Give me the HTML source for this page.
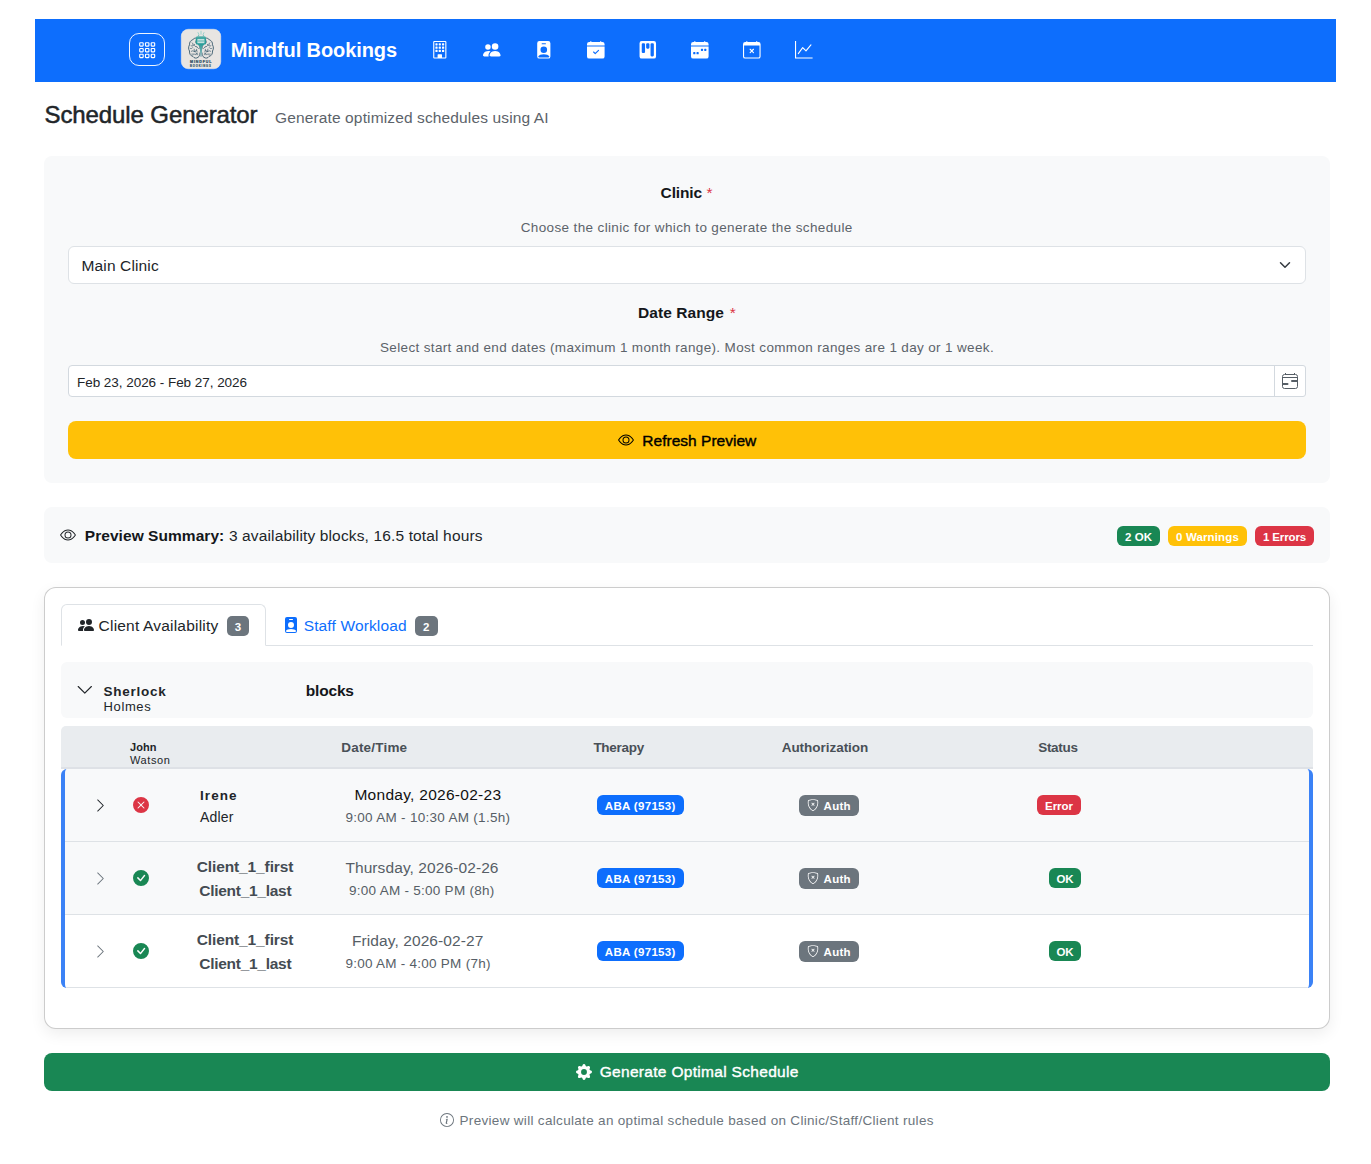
<!DOCTYPE html>
<html lang="en"><head><meta charset="utf-8"><title>Schedule Generator</title>
<style>
html,body{margin:0;padding:0;background:#fff;}
body{width:1371px;height:1164px;position:relative;overflow:hidden;font-family:'Liberation Sans', sans-serif;}
.b{position:absolute;box-sizing:border-box;}
.t{position:absolute;white-space:pre;font-family:'Liberation Sans', sans-serif;}
.i{position:absolute;display:block;overflow:visible;}
</style></head><body>
<div class="b" style="left:35px;top:19px;width:1301px;height:63px;background:#0d6efd"></div>
<div class="b" style="left:129px;top:33px;width:36px;height:33px;border:1px solid rgba(255,255,255,.92);border-radius:10px"></div>
<svg class="i" style="left:137.85px;top:40.9px;color:#fff" width="18.4" height="18.4" viewBox="0 0 16 16" fill="currentColor"><g fill="none" stroke="currentColor" stroke-width="1"><rect x="1.5" y="1.5" width="3" height="3" rx="0.5"/><rect x="1.5" y="6.5" width="3" height="3" rx="0.5"/><rect x="1.5" y="11.5" width="3" height="3" rx="0.5"/><rect x="6.5" y="1.5" width="3" height="3" rx="0.5"/><rect x="6.5" y="6.5" width="3" height="3" rx="0.5"/><rect x="6.5" y="11.5" width="3" height="3" rx="0.5"/><rect x="11.5" y="1.5" width="3" height="3" rx="0.5"/><rect x="11.5" y="6.5" width="3" height="3" rx="0.5"/><rect x="11.5" y="11.5" width="3" height="3" rx="0.5"/></g></svg>
<svg class="i" style="left:181px;top:29px" width="40" height="40" viewBox="0 0 40 40">
<defs><linearGradient id="lg1" x1="0" y1="0" x2="0" y2="1"><stop offset="0" stop-color="#5fb3ae"/><stop offset="0.35" stop-color="#2a9d98"/><stop offset="1" stop-color="#2a9d98"/></linearGradient>
<linearGradient id="lg2" x1="0" y1="0" x2="0" y2="1"><stop offset="0" stop-color="#2a9d98"/><stop offset="1" stop-color="#9db8c0"/></linearGradient></defs>
<rect x="0.250" y="0.250" width="39.500" height="39.500" rx="7" fill="#e8e5e2" stroke="#f3eee6" stroke-width="0.500"/>
<g fill="none" stroke="#38596b" stroke-linecap="round" stroke-linejoin="round" transform="translate(20,0) scale(.925,1) translate(-20,0)">
<path stroke-width="0.950" d="M17.3 10.300C15.600 8.500 12.500 8.700 11 10.800C8.800 11.300 7.300 13.500 7.600 15.800C6.300 17.600 6.300 20.400 7.600 22C7.200 24.600 8.800 27 11.200 27.400C12.400 29.300 15.200 29.600 16.800 28.300C18.300 27.500 19.100 25.800 18.900 24"/>
<path stroke-width="0.700" d="M8.600 19.500c1 .300 1.800 0 2.400-.800M10.300 13.600c.900.500 1.200 1.400.900 2.300M15.300 20.300c.200 1.200-.300 2.200-1.300 2.700M16.600 25.800c-.900-.200-1.500-.900-1.600-1.800M9.900 25.200c.700.200 1.300 0 1.700-.500M9.300 16.800c1.500.600 2.700.100 3.400-1.200M12.700 15.600c.2 1.500 1.200 2.400 2.800 2.300M14.300 11.800c-.6 1.200-.2 2.400 1 3M9.500 22.300c1.200-.900 2.600-.700 3.400.400M12.900 22.700c.8-1.100 2.100-1.300 3.200-.600M12.900 22.700l-.300-2.600M11.300 26.100c.8-1 2.100-1.300 3.200-.700M14.500 25.400l2-1.400M15.500 17.900l1.800 1.600M17.300 14.500c.9 1.700 1.400 3.400 1.600 5.300"/>
<g transform="translate(40,0) scale(-1,1)"><path stroke-width="0.950" d="M17.3 10.300C15.600 8.500 12.500 8.700 11 10.800C8.800 11.300 7.300 13.500 7.600 15.800C6.300 17.600 6.300 20.400 7.600 22C7.200 24.600 8.800 27 11.200 27.400C12.400 29.300 15.200 29.600 16.800 28.300C18.300 27.500 19.100 25.800 18.900 24"/><path stroke-width="0.700" d="M8.600 19.500c1 .300 1.800 0 2.400-.800M10.300 13.600c.900.500 1.200 1.400.900 2.300M15.300 20.300c.200 1.200-.300 2.200-1.300 2.700M16.600 25.800c-.900-.200-1.500-.900-1.600-1.800M9.900 25.200c.700.200 1.300 0 1.700-.500M9.300 16.800c1.500.600 2.700.100 3.400-1.200M12.700 15.600c.2 1.500 1.200 2.400 2.800 2.300M14.300 11.800c-.6 1.200-.2 2.400 1 3M9.500 22.300c1.200-.900 2.600-.700 3.400.400M12.900 22.700c.8-1.100 2.100-1.300 3.200-.600M12.900 22.700l-.300-2.600M11.300 26.100c.8-1 2.100-1.300 3.200-.700M14.500 25.400l2-1.400M15.500 17.900l1.800 1.600M17.300 14.500c.9 1.700 1.400 3.400 1.600 5.300"/></g>
</g>
<path d="M16.400 15h7.200l-2.500 2.700l-.250 10.100h-1.700l-.250-10.100z" fill="url(#lg2)"/>
<path d="M17.600 5.800v1.600M22.400 5.800v1.600" stroke="#4aa9a4" stroke-width="0.700"/>
<rect x="14.800" y="7.200" width="10.200" height="8.200" rx="1.500" fill="url(#lg1)"/>
<rect x="16.400" y="9.900" width="7" height="4.300" fill="#d3e9e6"/>
<path d="M16.400 11.300h7M16.400 12.700h7" stroke="#4aa9a4" stroke-width="0.600"/>
<path d="M20 2.200v3M17 3.600l.9 1.800M23 3.600l-.9 1.800" stroke="#93cfca" stroke-width="0.900" stroke-linecap="round"/>
<text x="9" y="34.200" font-family="Liberation Sans, sans-serif" font-weight="700" font-size="3.600" fill="#2f4e61" stroke="#2f4e61" stroke-width="0.220" textLength="21.500" lengthAdjust="spacing">MINDFUL</text>
<text x="9" y="38" font-family="Liberation Sans, sans-serif" font-weight="700" font-size="2.700" fill="#3b5a6c" stroke="#3b5a6c" stroke-width="0.180" textLength="20.800" lengthAdjust="spacing">BOOKINGS</text>
</svg>
<div class="t" style="left:230.70px;top:40px;font-size:20px;line-height:20px;color:#fff;font-weight:700;letter-spacing:-0.092px;">Mindful Bookings</div>
<svg class="i" style="left:430.7px;top:41px;color:#fff" width="17.6" height="17.6" viewBox="0 0 16 16" fill="currentColor"><path d="M4 2.5a.5.5 0 0 1 .5-.5h1a.5.5 0 0 1 .5.5v1a.5.5 0 0 1-.5.5h-1a.5.5 0 0 1-.5-.5zm3 0a.5.5 0 0 1 .5-.5h1a.5.5 0 0 1 .5.5v1a.5.5 0 0 1-.5.5h-1a.5.5 0 0 1-.5-.5zm3.5-.5a.5.5 0 0 0-.5.5v1a.5.5 0 0 0 .5.5h1a.5.5 0 0 0 .5-.5v-1a.5.5 0 0 0-.5-.5zM4 5.5a.5.5 0 0 1 .5-.5h1a.5.5 0 0 1 .5.5v1a.5.5 0 0 1-.5.5h-1a.5.5 0 0 1-.5-.5zM7.5 5a.5.5 0 0 0-.5.5v1a.5.5 0 0 0 .5.5h1a.5.5 0 0 0 .5-.5v-1a.5.5 0 0 0-.5-.5zm2.5.5a.5.5 0 0 1 .5-.5h1a.5.5 0 0 1 .5.5v1a.5.5 0 0 1-.5.5h-1a.5.5 0 0 1-.5-.5zM4.5 8a.5.5 0 0 0-.5.5v1a.5.5 0 0 0 .5.5h1a.5.5 0 0 0 .5-.5v-1a.5.5 0 0 0-.5-.5zm2.5.5a.5.5 0 0 1 .5-.5h1a.5.5 0 0 1 .5.5v1a.5.5 0 0 1-.5.5h-1a.5.5 0 0 1-.5-.5zm3.5-.5a.5.5 0 0 0-.5.5v1a.5.5 0 0 0 .5.5h1a.5.5 0 0 0 .5-.5v-1a.5.5 0 0 0-.5-.5z"/><path d="M2 1a1 1 0 0 1 1-1h10a1 1 0 0 1 1 1v14a1 1 0 0 1-1 1H3a1 1 0 0 1-1-1zm11 0H3v14h3v-2.5a.5.5 0 0 1 .5-.5h3a.5.5 0 0 1 .5.5V15h3z"/></svg>
<svg class="i" style="left:482.7px;top:41px;color:#fff" width="17.6" height="17.6" viewBox="0 0 16 16" fill="currentColor"><path d="M7 14s-1 0-1-1 1-4 5-4 5 3 5 4-1 1-1 1zm4-6a3 3 0 1 0 0-6 3 3 0 0 0 0 6m-5.784 6A2.24 2.24 0 0 1 5 13c0-1.355.68-2.75 1.936-3.72A6.3 6.3 0 0 0 5 9c-4 0-5 3-5 4s1 1 1 1zM4.5 8a2.5 2.5 0 1 0 0-5 2.5 2.5 0 0 0 0 5"/></svg>
<svg class="i" style="left:534.7px;top:41px;color:#fff" width="17.6" height="17.6" viewBox="0 0 16 16" fill="currentColor"><path d="M2 2a2 2 0 0 1 2-2h8a2 2 0 0 1 2 2v12a2 2 0 0 1-2 2H4a2 2 0 0 1-2-2zm4.5 0a.5.5 0 0 0 0 1h3a.5.5 0 0 0 0-1zM8 11a3 3 0 1 0 0-6 3 3 0 0 0 0 6m5 2.755C12.146 12.825 10.623 12 8 12s-4.146.826-5 1.755V14a1 1 0 0 0 1 1h8a1 1 0 0 0 1-1z"/></svg>
<svg class="i" style="left:586.7px;top:41px;color:#fff" width="17.6" height="17.6" viewBox="0 0 16 16" fill="currentColor"><path d="M4 .5a.5.5 0 0 0-1 0V1H2a2 2 0 0 0-2 2v1h16V3a2 2 0 0 0-2-2h-1V.5a.5.5 0 0 0-1 0V1H4zM16 14V5H0v9a2 2 0 0 0 2 2h12a2 2 0 0 0 2-2m-5.146-5.146-3 3a.5.5 0 0 1-.708 0l-1.5-1.5a.5.5 0 0 1 .708-.708L7.5 10.793l2.646-2.647a.5.5 0 0 1 .708.708"/></svg>
<svg class="i" style="left:638.7px;top:41px;color:#fff" width="17.6" height="17.6" viewBox="0 0 16 16" fill="currentColor"><path d="M2.5 0a2 2 0 0 0-2 2v12a2 2 0 0 0 2 2h11a2 2 0 0 0 2-2V2a2 2 0 0 0-2-2zm5 2h1a1 1 0 0 1 1 1v3a1 1 0 0 1-1 1h-1a1 1 0 0 1-1-1V3a1 1 0 0 1 1-1m-5 1a1 1 0 0 1 1-1h1a1 1 0 0 1 1 1v7a1 1 0 0 1-1 1h-1a1 1 0 0 1-1-1zm9-1h1a1 1 0 0 1 1 1v10a1 1 0 0 1-1 1h-1a1 1 0 0 1-1-1V3a1 1 0 0 1 1-1"/></svg>
<svg class="i" style="left:690.7px;top:41px;color:#fff" width="17.6" height="17.6" viewBox="0 0 16 16" fill="currentColor"><path d="M4 .5a.5.5 0 0 0-1 0V1H2a2 2 0 0 0-2 2v1h16V3a2 2 0 0 0-2-2h-1V.5a.5.5 0 0 0-1 0V1H4zM16 14V5H0v9a2 2 0 0 0 2 2h12a2 2 0 0 0 2-2M9.5 7h1a.5.5 0 0 1 .5.5v1a.5.5 0 0 1-.5.5h-1a.5.5 0 0 1-.5-.5v-1a.5.5 0 0 1 .5-.5m3 0h1a.5.5 0 0 1 .5.5v1a.5.5 0 0 1-.5.5h-1a.5.5 0 0 1-.5-.5v-1a.5.5 0 0 1 .5-.5M2 10.500a.5.5 0 0 1 .5-.5h1a.5.5 0 0 1 .5.5v1a.5.5 0 0 1-.5.5h-1a.5.5 0 0 1-.5-.5zm3.500-.5h1a.5.5 0 0 1 .5.5v1a.5.5 0 0 1-.5.5h-1a.5.5 0 0 1-.5-.5v-1a.5.5 0 0 1 .5-.5"/></svg>
<svg class="i" style="left:742.7px;top:41px;color:#fff" width="17.6" height="17.6" viewBox="0 0 16 16" fill="currentColor"><path d="M6.146 7.146a.5.5 0 0 1 .708 0L8 8.293l1.146-1.147a.5.5 0 1 1 .708.708L8.707 9l1.147 1.146a.5.5 0 0 1-.708.708L8 9.707l-1.146 1.147a.5.5 0 0 1-.708-.708L7.293 9 6.146 7.854a.5.5 0 0 1 0-.708"/><path d="M3.500 0a.5.5 0 0 1 .5.5V1h8V.5a.5.5 0 0 1 1 0V1h1a2 2 0 0 1 2 2v11a2 2 0 0 1-2 2H2a2 2 0 0 1-2-2V3a2 2 0 0 1 2-2h1V.5a.5.5 0 0 1 .5-.5M1 4v10a1 1 0 0 0 1 1h12a1 1 0 0 0 1-1V4z"/></svg>
<svg class="i" style="left:794.7px;top:41px;color:#fff" width="17.6" height="17.6" viewBox="0 0 16 16" fill="currentColor"><path fill-rule="evenodd" d="M0 0h1v15h15v1H0zm14.817 3.113a.5.5 0 0 1 .07.704l-4.500 5.500a.5.5 0 0 1-.740.037L7.060 6.767l-3.656 5.027a.5.5 0 0 1-.808-.588l4-5.500a.5.5 0 0 1 .758-.060l2.609 2.610 4.150-5.073a.5.5 0 0 1 .704-.070"/></svg>
<div class="t" style="left:44.50px;top:103px;font-size:24px;line-height:24px;color:#212529;letter-spacing:-0.101px;-webkit-text-stroke:0.5px #212529;">Schedule Generator</div>
<div class="t" style="left:275.00px;top:110px;font-size:15.5px;line-height:16px;color:#5c636a;letter-spacing:0.132px;">Generate optimized schedules using AI</div>
<div class="b" style="left:44px;top:156px;width:1286px;height:326.5px;background:#f8f9fa;border-radius:8px"></div>
<div class="t" style="left:660.60px;top:185px;font-size:15.5px;line-height:16px;color:#14171b;font-weight:700;letter-spacing:-0.134px;">Clinic</div>
<div class="t" style="left:706.50px;top:185px;font-size:15.5px;line-height:16px;color:#dc3545;">*</div>
<div class="t" style="left:520.70px;top:221px;font-size:13.5px;line-height:14px;color:#5c636a;letter-spacing:0.366px;">Choose the clinic for which to generate the schedule</div>
<div class="b" style="left:68px;top:246px;width:1238px;height:38px;background:#fff;border:1px solid #dee2e6;border-radius:6px"></div>
<div class="t" style="left:81.50px;top:258px;font-size:15.5px;line-height:16px;color:#212529;letter-spacing:0.135px;">Main Clinic</div>
<svg class="i" style="left:1277px;top:259px" width="16" height="12" viewBox="0 0 16 16"><path fill="none" stroke="#343a40" stroke-linecap="round" stroke-linejoin="round" stroke-width="2" d="m2 5 6 6 6-6"/></svg>
<div class="t" style="left:638.00px;top:305px;font-size:15.5px;line-height:16px;color:#14171b;font-weight:700;letter-spacing:0.072px;">Date Range</div>
<div class="t" style="left:729.80px;top:305px;font-size:15.5px;line-height:16px;color:#dc3545;">*</div>
<div class="t" style="left:380.00px;top:341px;font-size:13.5px;line-height:14px;color:#5c636a;letter-spacing:0.349px;">Select start and end dates (maximum 1 month range). Most common ranges are 1 day or 1 week.</div>
<div class="b" style="left:68px;top:365px;width:1238px;height:32px;background:#fff;border:1px solid #d3d9df;border-radius:4px 3px 3px 4px"></div>
<div class="b" style="left:1274px;top:365px;width:1px;height:32px;background:#d3d9df"></div>
<div class="t" style="left:77.00px;top:376px;font-size:13.5px;line-height:14px;color:#212529;letter-spacing:-0.042px;">Feb 23, 2026 - Feb 27, 2026</div>
<svg class="i" style="left:1282px;top:373px;color:#565e66" width="16" height="16" viewBox="0 0 16 16" fill="currentColor"><g fill="none" stroke="currentColor" stroke-width="1"><rect x="0.5" y="1.5" width="15" height="14" rx="2"/><path d="M3.500 0v1.500M12.500 0v1.500M0.500 4.500h15"/></g><path d="M9 8a1 1 0 0 1 1-1h5.500v2H10a1 1 0 0 1-1-1M0.500 10H5.500a1 1 0 1 1 0 2H0.500z"/></svg>
<div class="b" style="left:68px;top:421px;width:1238px;height:38px;background:#ffc107;border-radius:8px"></div>
<svg class="i" style="left:618px;top:432px;color:#000" width="16" height="16" viewBox="0 0 16 16" fill="currentColor"><path d="M16 8s-3-5.500-8-5.500S0 8 0 8s3 5.500 8 5.500S16 8 16 8M1.173 8a13 13 0 0 1 1.660-2.043C4.120 4.668 5.880 3.500 8 3.500s3.879 1.168 5.168 2.457A13 13 0 0 1 14.828 8q-.086.130-.195.288c-.335.480-.830 1.120-1.465 1.755C11.879 11.332 10.119 12.500 8 12.500s-3.879-1.168-5.168-2.457A13 13 0 0 1 1.172 8z"/><path d="M8 5.500a2.500 2.500 0 1 0 0 5 2.500 2.500 0 0 0 0-5M4.500 8a3.500 3.500 0 1 1 7 0 3.500 3.500 0 0 1-7 0"/></svg>
<div class="t" style="left:642.30px;top:433px;font-size:15.5px;line-height:16px;color:#000;letter-spacing:0.019px;-webkit-text-stroke:0.4px #000;">Refresh Preview</div>
<div class="b" style="left:44px;top:507px;width:1286px;height:56px;background:#f8f9fa;border-radius:8px"></div>
<svg class="i" style="left:60px;top:527px;color:#212529" width="16" height="16" viewBox="0 0 16 16" fill="currentColor"><path d="M16 8s-3-5.500-8-5.500S0 8 0 8s3 5.500 8 5.500S16 8 16 8M1.173 8a13 13 0 0 1 1.660-2.043C4.120 4.668 5.880 3.500 8 3.500s3.879 1.168 5.168 2.457A13 13 0 0 1 14.828 8q-.086.130-.195.288c-.335.480-.830 1.120-1.465 1.755C11.879 11.332 10.119 12.500 8 12.500s-3.879-1.168-5.168-2.457A13 13 0 0 1 1.172 8z"/><path d="M8 5.500a2.500 2.500 0 1 0 0 5 2.500 2.500 0 0 0 0-5M4.500 8a3.500 3.500 0 1 1 7 0 3.500 3.500 0 0 1-7 0"/></svg>
<div class="t" style="left:84.80px;top:528px;font-size:15.5px;line-height:16px;color:#14171b;font-weight:700;letter-spacing:0.049px;">Preview Summary:</div>
<div class="t" style="left:228.90px;top:528px;font-size:15.5px;line-height:16px;color:#212529;letter-spacing:0.143px;">3 availability blocks, 16.5 total hours</div>
<div class="b" style="left:1117px;top:526px;width:43px;height:20px;background:#198754;border-radius:6px"></div><div class="t" style="left:1125.00px;top:531px;font-size:11.5px;line-height:12px;color:#fff;font-weight:700;letter-spacing:0.039px;">2 OK</div>
<div class="b" style="left:1168px;top:526px;width:79px;height:20px;background:#ffc107;border-radius:6px"></div><div class="t" style="left:1176.00px;top:531px;font-size:11.5px;line-height:12px;color:#fff;font-weight:700;letter-spacing:0.144px;">0 Warnings</div>
<div class="b" style="left:1255px;top:526px;width:59px;height:20px;background:#dc3545;border-radius:6px"></div><div class="t" style="left:1263.00px;top:531px;font-size:11.5px;line-height:12px;color:#fff;font-weight:700;letter-spacing:-0.139px;">1 Errors</div>
<div class="b" style="left:44px;top:587px;width:1286px;height:441.5px;background:#fff;border:1px solid rgba(0,0,0,.2);border-radius:12px;box-shadow:0 5px 15px rgba(0,0,0,.07)"></div>
<div class="b" style="left:61px;top:645px;width:1252px;height:1px;background:#dee2e6"></div>
<div class="b" style="left:61px;top:604px;width:205px;height:42px;background:#fff;border:1px solid #dee2e6;border-bottom-color:#fff;border-radius:6px 6px 0 0"></div>
<svg class="i" style="left:78px;top:617px;color:#212529" width="16" height="16" viewBox="0 0 16 16" fill="currentColor"><path d="M7 14s-1 0-1-1 1-4 5-4 5 3 5 4-1 1-1 1zm4-6a3 3 0 1 0 0-6 3 3 0 0 0 0 6m-5.784 6A2.24 2.24 0 0 1 5 13c0-1.355.68-2.75 1.936-3.72A6.3 6.3 0 0 0 5 9c-4 0-5 3-5 4s1 1 1 1zM4.5 8a2.5 2.5 0 1 0 0-5 2.5 2.5 0 0 0 0 5"/></svg>
<div class="t" style="left:98.60px;top:618px;font-size:15.5px;line-height:16px;color:#212529;letter-spacing:0.198px;">Client Availability</div>
<div class="b" style="left:227px;top:616px;width:22px;height:20px;background:#6c757d;border-radius:5px"></div><div class="t" style="left:234.65px;top:621px;font-size:11.5px;line-height:12px;color:#fff;font-weight:700;letter-spacing:0.294px;">3</div>
<svg class="i" style="left:283px;top:617px;color:#0d6efd" width="16" height="16" viewBox="0 0 16 16" fill="currentColor"><path d="M2 2a2 2 0 0 1 2-2h8a2 2 0 0 1 2 2v12a2 2 0 0 1-2 2H4a2 2 0 0 1-2-2zm4.5 0a.5.5 0 0 0 0 1h3a.5.5 0 0 0 0-1zM8 11a3 3 0 1 0 0-6 3 3 0 0 0 0 6m5 2.755C12.146 12.825 10.623 12 8 12s-4.146.826-5 1.755V14a1 1 0 0 0 1 1h8a1 1 0 0 0 1-1z"/></svg>
<div class="t" style="left:303.70px;top:618px;font-size:15.5px;line-height:16px;color:#0d6efd;letter-spacing:0.136px;">Staff Workload</div>
<div class="b" style="left:415px;top:616px;width:22.5px;height:20px;background:#6c757d;border-radius:5px"></div><div class="t" style="left:422.90px;top:621px;font-size:11.5px;line-height:12px;color:#fff;font-weight:700;letter-spacing:0.294px;">2</div>
<div class="b" style="left:61px;top:662px;width:1252px;height:56px;background:#f8f9fa;border-radius:6px"></div>
<svg class="i" style="left:76.25px;top:681.05px;color:#212529" width="17.6" height="17.6" viewBox="0 0 16 16" fill="currentColor"><path fill-rule="evenodd" d="M1.646 4.646a.5.5 0 0 1 .708 0L8 10.293l5.646-5.647a.5.5 0 0 1 .708.708l-6 6a.5.5 0 0 1-.708 0l-6-6a.5.5 0 0 1 0-.708"/></svg>
<div class="t" style="left:103.60px;top:685px;font-size:13.5px;line-height:14px;color:#212529;font-weight:700;letter-spacing:0.746px;">Sherlock</div>
<div class="t" style="left:103.60px;top:700px;font-size:13px;line-height:13px;color:#212529;letter-spacing:0.604px;">Holmes</div>
<div class="t" style="left:305.80px;top:683px;font-size:15.5px;line-height:16px;color:#14171b;font-weight:700;letter-spacing:-0.185px;">blocks</div>
<div class="b" style="left:61px;top:726px;width:1252px;height:43px;background:#e9ecef;border-radius:5px 5px 0 0;border-bottom:2px solid #dee1e6"></div>
<div class="t" style="left:130.00px;top:742px;font-size:11px;line-height:11px;color:#212529;font-weight:700;letter-spacing:0.080px;">John</div>
<div class="t" style="left:130.00px;top:755px;font-size:11px;line-height:11px;color:#212529;letter-spacing:0.618px;">Watson</div>
<div class="t" style="left:341.30px;top:741px;font-size:13.5px;line-height:14px;color:#495057;font-weight:700;letter-spacing:0.191px;">Date/Time</div>
<div class="t" style="left:593.40px;top:741px;font-size:13.5px;line-height:14px;color:#495057;font-weight:700;letter-spacing:-0.262px;">Therapy</div>
<div class="t" style="left:781.70px;top:741px;font-size:13.5px;line-height:14px;color:#495057;font-weight:700;letter-spacing:-0.031px;">Authorization</div>
<div class="t" style="left:1038.20px;top:741px;font-size:13.5px;line-height:14px;color:#495057;font-weight:700;letter-spacing:-0.311px;">Status</div>
<div class="b" style="left:61px;top:769px;width:1252px;height:219px;border-left:4px solid #3b82f6;border-right:4px solid #3b82f6;border-radius:6px;overflow:hidden;background:#fff"><div class="b" style="left:0;top:0;width:1244px;height:73px;background:#f8f9fa;border-bottom:1px solid #dee2e6"></div><div class="b" style="left:0;top:73px;width:1244px;height:73px;background:#f8f9fa;border-bottom:1px solid #dee2e6"></div><div class="b" style="left:0;top:146px;width:1244px;height:73px;background:#fff;border-bottom:1px solid #dee2e6"></div></div>
<svg class="i" style="left:93px;top:797.5px;color:#212529" width="15" height="15" viewBox="0 0 16 16" fill="currentColor"><path fill-rule="evenodd" d="M4.646 1.646a.5.5 0 0 1 .708 0l6 6a.5.5 0 0 1 0 .708l-6 6a.5.5 0 0 1-.708-.708L10.293 8 4.646 2.354a.5.5 0 0 1 0-.708"/></svg>
<svg class="i" style="left:133px;top:797px;color:#dc3545" width="16" height="16" viewBox="0 0 16 16" fill="currentColor"><path d="M16 8A8 8 0 1 1 0 8a8 8 0 0 1 16 0M5.354 4.646a.5.5 0 1 0-.708.708L7.293 8l-2.647 2.646a.5.5 0 0 0 .708.708L8 8.707l2.646 2.647a.5.5 0 0 0 .708-.708L8.707 8l2.647-2.646a.5.5 0 0 0-.708-.708L8 7.293z"/></svg>
<div class="b" style="left:596.5px;top:795px;width:87.5px;height:20px;background:#0d6efd;border-radius:6px"></div><div class="t" style="left:604.75px;top:800px;font-size:11.5px;line-height:12px;color:#fff;font-weight:700;letter-spacing:0.334px;">ABA (97153)</div>
<div class="b" style="left:799px;top:795px;width:60px;height:21px;background:#6c757d;border-radius:6px"></div>
<svg class="i" style="left:807.4px;top:799px;color:#fff" width="12" height="12" viewBox="0 0 16 16" fill="currentColor"><path d="M5.338 1.590a61 61 0 0 0-2.837.856.48.48 0 0 0-.328.390c-.554 4.157.726 7.190 2.253 9.188a10.700 10.700 0 0 0 2.287 2.233c.346.244.652.420.893.533q.180.085.293.118a1 1 0 0 0 .101.025 1 1 0 0 0 .100-.025q.114-.034.294-.118c.240-.113.547-.290.893-.533a10.700 10.700 0 0 0 2.287-2.233c1.527-1.997 2.807-5.031 2.253-9.188a.48.48 0 0 0-.328-.390c-.651-.213-1.750-.560-2.837-.855C9.552 1.290 8.531 1.067 8 1.067c-.530 0-1.552.223-2.662.524zM5.072.560C6.157.265 7.310 0 8 0s1.843.265 2.928.560c1.110.300 2.229.655 2.887.870a1.540 1.540 0 0 1 1.044 1.262c.596 4.477-.787 7.795-2.465 9.990a11.800 11.800 0 0 1-2.517 2.453 7 7 0 0 1-1.048.625c-.280.132-.581.240-.829.240s-.548-.108-.829-.240a7 7 0 0 1-1.048-.625 11.800 11.800 0 0 1-2.517-2.453C1.928 10.487.545 7.169 1.141 2.692A1.540 1.540 0 0 1 2.185 1.430 63 63 0 0 1 5.072.560"/><path d="M6.146 5.146a.5.5 0 0 1 .708 0L8 6.293l1.146-1.147a.5.5 0 1 1 .708.708L8.707 7l1.147 1.146a.5.5 0 0 1-.708.708L8 7.707 6.854 8.854a.5.5 0 0 1-.708-.708L7.293 7 6.146 5.854a.5.5 0 0 1 0-.708"/></svg>
<div class="t" style="left:823.60px;top:800px;font-size:11.5px;line-height:12px;color:#fff;font-weight:700;letter-spacing:0.278px;">Auth</div>
<svg class="i" style="left:93px;top:870.5px;color:#6c757d" width="15" height="15" viewBox="0 0 16 16" fill="currentColor"><path fill-rule="evenodd" d="M4.646 1.646a.5.5 0 0 1 .708 0l6 6a.5.5 0 0 1 0 .708l-6 6a.5.5 0 0 1-.708-.708L10.293 8 4.646 2.354a.5.5 0 0 1 0-.708"/></svg>
<svg class="i" style="left:133px;top:870px;color:#198754" width="16" height="16" viewBox="0 0 16 16" fill="currentColor"><path d="M16 8A8 8 0 1 1 0 8a8 8 0 0 1 16 0m-3.970-3.030a.75.75 0 0 0-1.080.022L7.477 9.417 5.384 7.323a.75.75 0 0 0-1.060 1.060L6.970 11.030a.75.75 0 0 0 1.079-.020l3.992-4.990a.75.75 0 0 0-.010-1.050z"/></svg>
<div class="b" style="left:596.5px;top:868px;width:87.5px;height:20px;background:#0d6efd;border-radius:6px"></div><div class="t" style="left:604.75px;top:873px;font-size:11.5px;line-height:12px;color:#fff;font-weight:700;letter-spacing:0.334px;">ABA (97153)</div>
<div class="b" style="left:799px;top:868px;width:60px;height:21px;background:#6c757d;border-radius:6px"></div>
<svg class="i" style="left:807.4px;top:872px;color:#fff" width="12" height="12" viewBox="0 0 16 16" fill="currentColor"><path d="M5.338 1.590a61 61 0 0 0-2.837.856.48.48 0 0 0-.328.390c-.554 4.157.726 7.190 2.253 9.188a10.700 10.700 0 0 0 2.287 2.233c.346.244.652.420.893.533q.180.085.293.118a1 1 0 0 0 .101.025 1 1 0 0 0 .100-.025q.114-.034.294-.118c.240-.113.547-.290.893-.533a10.700 10.700 0 0 0 2.287-2.233c1.527-1.997 2.807-5.031 2.253-9.188a.48.48 0 0 0-.328-.390c-.651-.213-1.750-.560-2.837-.855C9.552 1.290 8.531 1.067 8 1.067c-.530 0-1.552.223-2.662.524zM5.072.560C6.157.265 7.310 0 8 0s1.843.265 2.928.560c1.110.300 2.229.655 2.887.870a1.540 1.540 0 0 1 1.044 1.262c.596 4.477-.787 7.795-2.465 9.990a11.800 11.800 0 0 1-2.517 2.453 7 7 0 0 1-1.048.625c-.280.132-.581.240-.829.240s-.548-.108-.829-.240a7 7 0 0 1-1.048-.625 11.800 11.800 0 0 1-2.517-2.453C1.928 10.487.545 7.169 1.141 2.692A1.540 1.540 0 0 1 2.185 1.430 63 63 0 0 1 5.072.560"/><path d="M6.146 5.146a.5.5 0 0 1 .708 0L8 6.293l1.146-1.147a.5.5 0 1 1 .708.708L8.707 7l1.147 1.146a.5.5 0 0 1-.708.708L8 7.707 6.854 8.854a.5.5 0 0 1-.708-.708L7.293 7 6.146 5.854a.5.5 0 0 1 0-.708"/></svg>
<div class="t" style="left:823.60px;top:873px;font-size:11.5px;line-height:12px;color:#fff;font-weight:700;letter-spacing:0.278px;">Auth</div>
<svg class="i" style="left:93px;top:943.5px;color:#6c757d" width="15" height="15" viewBox="0 0 16 16" fill="currentColor"><path fill-rule="evenodd" d="M4.646 1.646a.5.5 0 0 1 .708 0l6 6a.5.5 0 0 1 0 .708l-6 6a.5.5 0 0 1-.708-.708L10.293 8 4.646 2.354a.5.5 0 0 1 0-.708"/></svg>
<svg class="i" style="left:133px;top:943px;color:#198754" width="16" height="16" viewBox="0 0 16 16" fill="currentColor"><path d="M16 8A8 8 0 1 1 0 8a8 8 0 0 1 16 0m-3.970-3.030a.75.75 0 0 0-1.080.022L7.477 9.417 5.384 7.323a.75.75 0 0 0-1.060 1.060L6.970 11.030a.75.75 0 0 0 1.079-.020l3.992-4.990a.75.75 0 0 0-.010-1.050z"/></svg>
<div class="b" style="left:596.5px;top:941px;width:87.5px;height:20px;background:#0d6efd;border-radius:6px"></div><div class="t" style="left:604.75px;top:946px;font-size:11.5px;line-height:12px;color:#fff;font-weight:700;letter-spacing:0.334px;">ABA (97153)</div>
<div class="b" style="left:799px;top:941px;width:60px;height:21px;background:#6c757d;border-radius:6px"></div>
<svg class="i" style="left:807.4px;top:945px;color:#fff" width="12" height="12" viewBox="0 0 16 16" fill="currentColor"><path d="M5.338 1.590a61 61 0 0 0-2.837.856.48.48 0 0 0-.328.390c-.554 4.157.726 7.190 2.253 9.188a10.700 10.700 0 0 0 2.287 2.233c.346.244.652.420.893.533q.180.085.293.118a1 1 0 0 0 .101.025 1 1 0 0 0 .100-.025q.114-.034.294-.118c.240-.113.547-.290.893-.533a10.700 10.700 0 0 0 2.287-2.233c1.527-1.997 2.807-5.031 2.253-9.188a.48.48 0 0 0-.328-.390c-.651-.213-1.750-.560-2.837-.855C9.552 1.290 8.531 1.067 8 1.067c-.530 0-1.552.223-2.662.524zM5.072.560C6.157.265 7.310 0 8 0s1.843.265 2.928.560c1.110.300 2.229.655 2.887.870a1.540 1.540 0 0 1 1.044 1.262c.596 4.477-.787 7.795-2.465 9.990a11.800 11.800 0 0 1-2.517 2.453 7 7 0 0 1-1.048.625c-.280.132-.581.240-.829.240s-.548-.108-.829-.240a7 7 0 0 1-1.048-.625 11.800 11.800 0 0 1-2.517-2.453C1.928 10.487.545 7.169 1.141 2.692A1.540 1.540 0 0 1 2.185 1.430 63 63 0 0 1 5.072.560"/><path d="M6.146 5.146a.5.5 0 0 1 .708 0L8 6.293l1.146-1.147a.5.5 0 1 1 .708.708L8.707 7l1.147 1.146a.5.5 0 0 1-.708.708L8 7.707 6.854 8.854a.5.5 0 0 1-.708-.708L7.293 7 6.146 5.854a.5.5 0 0 1 0-.708"/></svg>
<div class="t" style="left:823.60px;top:946px;font-size:11.5px;line-height:12px;color:#fff;font-weight:700;letter-spacing:0.278px;">Auth</div>
<div class="b" style="left:1037px;top:795px;width:44px;height:20px;background:#dc3545;border-radius:6px"></div><div class="t" style="left:1045.00px;top:800px;font-size:11.5px;line-height:12px;color:#fff;font-weight:700;letter-spacing:-0.025px;">Error</div>
<div class="b" style="left:1049px;top:868px;width:32px;height:20px;background:#198754;border-radius:6px"></div><div class="t" style="left:1056.50px;top:873px;font-size:11.5px;line-height:12px;color:#fff;font-weight:700;letter-spacing:-0.125px;">OK</div>
<div class="b" style="left:1049px;top:941px;width:32px;height:20px;background:#198754;border-radius:6px"></div><div class="t" style="left:1056.50px;top:946px;font-size:11.5px;line-height:12px;color:#fff;font-weight:700;letter-spacing:-0.125px;">OK</div>
<div class="t" style="left:200.00px;top:789px;font-size:13.5px;line-height:14px;color:#212529;font-weight:700;letter-spacing:1.064px;">Irene</div>
<div class="t" style="left:200.00px;top:810px;font-size:14px;line-height:14px;color:#212529;letter-spacing:0.203px;">Adler</div>
<div class="t" style="left:196.80px;top:859px;font-size:15.5px;line-height:16px;color:#444b52;font-weight:700;letter-spacing:-0.122px;">Client_1_first</div>
<div class="t" style="left:199.30px;top:883px;font-size:15.5px;line-height:16px;color:#444b52;font-weight:700;letter-spacing:-0.280px;">Client_1_last</div>
<div class="t" style="left:196.80px;top:932px;font-size:15.5px;line-height:16px;color:#444b52;font-weight:700;letter-spacing:-0.122px;">Client_1_first</div>
<div class="t" style="left:199.30px;top:956px;font-size:15.5px;line-height:16px;color:#444b52;font-weight:700;letter-spacing:-0.280px;">Client_1_last</div>
<div class="t" style="left:354.40px;top:787px;font-size:15.5px;line-height:16px;color:#111;letter-spacing:0.283px;">Monday, 2026-02-23</div>
<div class="t" style="left:345.40px;top:811px;font-size:13.5px;line-height:14px;color:#565e66;letter-spacing:0.296px;">9:00 AM - 10:30 AM (1.5h)</div>
<div class="t" style="left:345.40px;top:860px;font-size:15.5px;line-height:16px;color:#565e66;letter-spacing:0.091px;">Thursday, 2026-02-26</div>
<div class="t" style="left:349.00px;top:884px;font-size:13.5px;line-height:14px;color:#565e66;letter-spacing:0.270px;">9:00 AM - 5:00 PM (8h)</div>
<div class="t" style="left:352.00px;top:933px;font-size:15.5px;line-height:16px;color:#565e66;letter-spacing:0.088px;">Friday, 2026-02-27</div>
<div class="t" style="left:345.40px;top:957px;font-size:13.5px;line-height:14px;color:#565e66;letter-spacing:0.261px;">9:00 AM - 4:00 PM (7h)</div>
<div class="b" style="left:44px;top:1053px;width:1286px;height:38px;background:#198754;border-radius:8px"></div>
<svg class="i" style="left:575.5px;top:1064px;color:#fff" width="16" height="16" viewBox="0 0 16 16" fill="currentColor"><path d="M9.405 1.050c-.413-1.400-2.397-1.400-2.810 0l-.100.340a1.464 1.464 0 0 1-2.105.872l-.310-.170c-1.283-.698-2.686.705-1.987 1.987l.169.311c.446.820.023 1.841-.872 2.105l-.340.100c-1.400.413-1.400 2.397 0 2.810l.340.100a1.464 1.464 0 0 1 .872 2.105l-.170.310c-.698 1.283.705 2.686 1.987 1.987l.311-.169a1.464 1.464 0 0 1 2.105.872l.100.340c.413 1.400 2.397 1.400 2.810 0l.100-.340a1.464 1.464 0 0 1 2.105-.872l.310.170c1.283.698 2.686-.705 1.987-1.987l-.169-.311a1.464 1.464 0 0 1 .872-2.105l.340-.100c1.400-.413 1.400-2.397 0-2.810l-.340-.100a1.464 1.464 0 0 1-.872-2.105l.170-.310c.698-1.283-.705-2.686-1.987-1.987l-.311.169a1.464 1.464 0 0 1-2.105-.872zM8 10.930a2.929 2.929 0 1 1 0-5.860 2.929 2.929 0 0 1 0 5.858z"/></svg>
<div class="t" style="left:599.70px;top:1064px;font-size:15.5px;line-height:16px;color:#fff;letter-spacing:0.309px;-webkit-text-stroke:0.4px #fff;">Generate Optimal Schedule</div>
<svg class="i" style="left:440px;top:1113.3px;color:#6c757d" width="14" height="14" viewBox="0 0 16 16" fill="currentColor"><path d="M8 15A7 7 0 1 1 8 1a7 7 0 0 1 0 14m0 1A8 8 0 1 0 8 0a8 8 0 0 0 0 16"/><path d="m8.930 6.588-2.290.287-.082.380.450.083c.294.070.352.176.288.469l-.738 3.468c-.194.897.105 1.319.808 1.319.545 0 1.178-.252 1.465-.598l.088-.416c-.200.176-.492.246-.686.246-.275 0-.375-.193-.304-.533zM9 4.500a1 1 0 1 1-2 0 1 1 0 0 1 2 0"/></svg>
<div class="t" style="left:459.50px;top:1114px;font-size:13.5px;line-height:14px;color:#6c757d;letter-spacing:0.316px;">Preview will calculate an optimal schedule based on Clinic/Staff/Client rules</div>
</body></html>
